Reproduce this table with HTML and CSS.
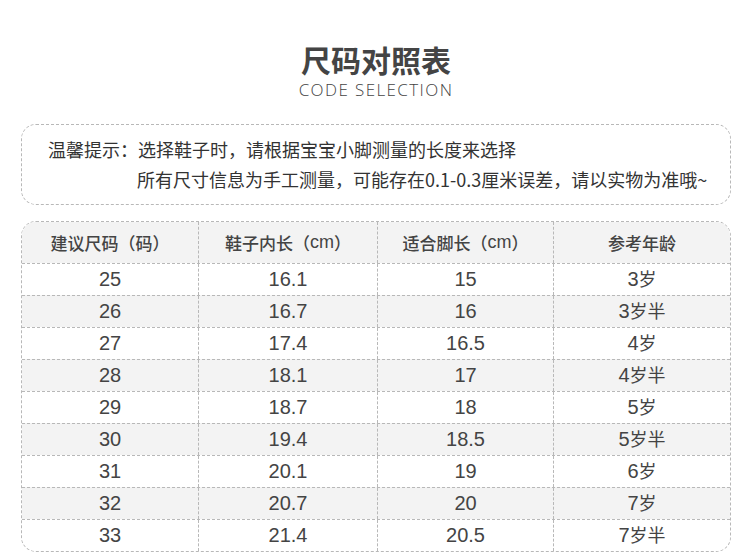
FILE: index.html
```html
<!DOCTYPE html>
<html lang="zh-CN">
<head>
<meta charset="utf-8">
<link rel="stylesheet" href="styles.css">
</head>
<body>
<div class="page">
  <header class="heading">
    <h1 class="title">尺码对照表</h1>
    <div class="subtitle">CODE SELECTION</div>
  </header>
  <div class="notice">
    <span class="notice-label">温馨提示：</span>
    <div class="notice-lines">
      <div>选择鞋子时，请根据宝宝小脚测量的长度来选择</div>
      <div>所有尺寸信息为手工测量，可能存在0.1-0.3厘米误差，请以实物为准哦~</div>
    </div>
  </div>
  <div class="size-table">
    <div class="row head">
      <div class="cell">建议尺码（码）</div>
      <div class="cell">鞋子内长（<span class="unit">cm</span>）</div>
      <div class="cell">适合脚长（<span class="unit">cm</span>）</div>
      <div class="cell">参考年龄</div>
    </div>
    <div class="row"><div class="cell">25</div><div class="cell">16.1</div><div class="cell">15</div><div class="cell age">3<span>岁</span></div></div>
    <div class="row alt"><div class="cell">26</div><div class="cell">16.7</div><div class="cell">16</div><div class="cell age">3<span>岁半</span></div></div>
    <div class="row"><div class="cell">27</div><div class="cell">17.4</div><div class="cell">16.5</div><div class="cell age">4<span>岁</span></div></div>
    <div class="row alt"><div class="cell">28</div><div class="cell">18.1</div><div class="cell">17</div><div class="cell age">4<span>岁半</span></div></div>
    <div class="row"><div class="cell">29</div><div class="cell">18.7</div><div class="cell">18</div><div class="cell age">5<span>岁</span></div></div>
    <div class="row alt"><div class="cell">30</div><div class="cell">19.4</div><div class="cell">18.5</div><div class="cell age">5<span>岁半</span></div></div>
    <div class="row"><div class="cell">31</div><div class="cell">20.1</div><div class="cell">19</div><div class="cell age">6<span>岁</span></div></div>
    <div class="row alt"><div class="cell">32</div><div class="cell">20.7</div><div class="cell">20</div><div class="cell age">7<span>岁</span></div></div>
    <div class="row last"><div class="cell">33</div><div class="cell">21.4</div><div class="cell">20.5</div><div class="cell age">7<span>岁半</span></div></div>
  </div>
</div>
</body>
</html>
```

FILE: styles.css
```css
html, body {
  margin: 0;
  padding: 0;
  background: #ffffff;
}

.page {
  width: 710px;
  margin: 0 0 0 21px;
  font-family: "Noto Sans CJK SC", "Noto Sans", sans-serif;
  color: #333333;
}

.heading {
  padding-top: 43px;
  text-align: center;
}

.title {
  margin: 0;
  font-size: 30px;
  line-height: 32px;
  font-weight: 700;
  color: #444444;
  letter-spacing: 0;
}

.subtitle {
  margin-top: 5px;
  font-family: "Open Sans", "Liberation Sans", sans-serif;
  font-weight: 300;
  font-size: 17px;
  letter-spacing: 1.4px;
  line-height: 20px;
  color: #444444;
}

.notice {
  margin-top: 24px;
  display: flex;
  border: 1px dashed #b8b8b8;
  border-radius: 15px;
  padding: 9px 0 10px 26px;
  font-size: 18px;
  line-height: 30px;
  color: #333333;
}

.notice-label {
  flex: none;
}

.notice-lines div:nth-child(2) {
  margin-left: -1px;
}

.size-table {
  margin-top: 16px;
  border: 1px dashed #b8b8b8;
  border-radius: 15px;
  overflow: hidden;
}

.row {
  display: grid;
  grid-template-columns: 177px 179px 176px 1fr;
  height: 32px;
  border-top: 1px dashed #b8b8b8;
  box-sizing: border-box;
}

.row.head {
  height: 41px;
  border-top: none;
  background: #f3f3f3;
}

.row.alt {
  background: #f3f3f3;
}

.cell {
  display: flex;
  align-items: center;
  justify-content: center;
  border-right: 1px dashed #b8b8b8;
  font-family: "Liberation Sans", "Noto Sans CJK SC", sans-serif;
  font-size: 20px;
  color: #444444;
}

.cell:last-child {
  border-right: none;
}

.cell.age span {
  font-family: "Noto Sans CJK SC", sans-serif;
  font-size: 18px;
  line-height: 1;
  margin-top: -3px;
}

.row.head .cell {
  font-family: "Noto Sans CJK SC", sans-serif;
  font-size: 17px;
  font-weight: 500;
  color: #444444;
}

.row.head .unit {
  font-family: "Liberation Sans", sans-serif;
  font-weight: 400;
  font-size: 18px;
}
```
